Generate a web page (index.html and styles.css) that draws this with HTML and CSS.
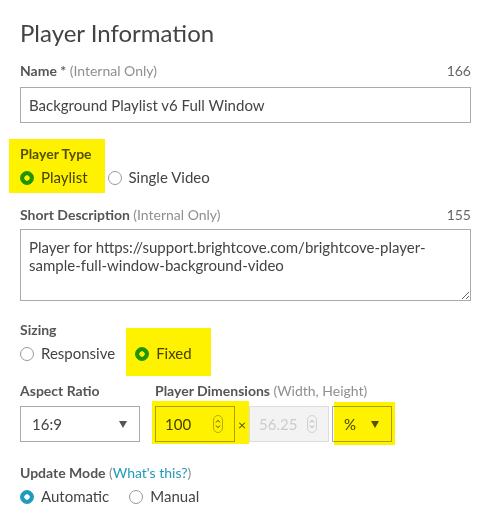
FILE: index.html
```html
<!DOCTYPE html>
<html lang="en">
<head>
<meta charset="utf-8">
<title>Player Information</title>
<link rel="stylesheet" href="styles.css">
</head>
<body>
<div class="page">
  <div class="form">
    <h1 class="title">Player Information</h1>

    <div class="field field-name">
      <div class="label-row">
        <span class="label">Name <span class="req">*</span> <span class="hint">(Internal Only)</span></span>
        <span class="count">166</span>
      </div>
      <div class="input control-top-lg">Background Playlist v6 Full Window</div>
    </div>

    <div class="field field-gap-lg">
      <div class="label-row"><span class="label">Player Type</span></div>
      <div class="radios">
        <span class="radio"><span class="dot checked"></span>Playlist</span>
        <span class="radio"><span class="dot"></span>Single Video</span>
      </div>
    </div>

    <div class="field field-gap">
      <div class="label-row">
        <span class="label">Short Description <span class="hint">(Internal Only)</span></span>
        <span class="count">155</span>
      </div>
      <textarea class="textarea control-top">Player for https://support.brightcove.com/brightcove-player-sample-full-window-background-video</textarea>
    </div>

    <div class="field field-gap-md">
      <div class="label-row"><span class="label">Sizing</span></div>
      <div class="radios">
        <span class="radio"><span class="dot"></span>Responsive</span>
        <span class="radio"><span class="dot checked"></span>Fixed</span>
      </div>
    </div>

    <div class="row field-gap">
      <div class="col-aspect">
        <div class="label-row"><span class="label">Aspect Ratio</span></div>
        <div class="select select-aspect control-top-md"><span>16:9</span><span class="caret"></span></div>
      </div>
      <div class="col-dims">
        <div class="label-row"><span class="label">Player Dimensions <span class="hint">(Width, Height)</span></span></div>
        <div class="dims control-top-md">
          <div class="num">
            <span>100</span>
            <svg class="spin" width="10" height="18" viewBox="0 0 10 18"><rect x="0.5" y="0.5" width="9" height="17" rx="4.5" fill="none" stroke="#b5b5b5"/><polyline points="3,7.5 5,5.3 7,7.5" fill="none" stroke="#555" stroke-width="1"/><polyline points="3,10.5 5,12.7 7,10.5" fill="none" stroke="#555" stroke-width="1"/></svg>
          </div>
          <span class="times">×</span>
          <div class="num num-disabled">
            <span>56.25</span>
            <svg class="spin" width="10" height="18" viewBox="0 0 10 18"><rect x="0.5" y="0.5" width="9" height="17" rx="4.5" fill="none" stroke="#cfcfcf"/><polyline points="3,7.5 5,5.3 7,7.5" fill="none" stroke="#aaa" stroke-width="1"/><polyline points="3,10.5 5,12.7 7,10.5" fill="none" stroke="#aaa" stroke-width="1"/></svg>
          </div>
          <div class="select select-unit"><span>%</span><span class="caret"></span></div>
        </div>
      </div>
    </div>

    <div class="field field-gap-lg">
      <div class="label-row"><span class="label">Update Mode <span class="hint">(<span class="link">What's this?</span>)</span></span></div>
      <div class="radios">
        <span class="radio"><span class="dot checked"></span>Automatic</span>
        <span class="radio"><span class="dot"></span>Manual</span>
      </div>
    </div>
  </div>

  <div class="hl hl-type"></div>
  <div class="hl hl-fixed"></div>
  <div class="hl hl-width"></div>
  <div class="hl hl-unit"></div>
</div>
</body>
</html>
```

FILE: styles.css
```css
html, body {
  margin: 0;
  background: #fff;
}

body {
  font-family: Lato, "Noto Sans", "Liberation Sans", sans-serif;
  color: #444;
}

.page {
  position: relative;
  padding: 18px 0 0 20px;
}

.form {
  width: 451px;
}

.title {
  margin: 0;
  font-size: 24px;
  font-weight: 400;
  line-height: 29px;
  color: #444;
}

.field-name { margin-top: 14px; }
.field-gap { margin-top: 18px; }
.field-gap-md { margin-top: 19px; }
.field-gap-lg { margin-top: 21px; }

.label-row {
  display: flex;
  justify-content: space-between;
  font-size: 14px;
  line-height: 20px;
}

.label {
  font-weight: 700;
  color: #555;
}

.req {
  color: #666;
}

.hint {
  font-weight: 400;
  color: #8f8f8f;
}

.link {
  color: #2299b8;
}

.count {
  color: #666;
}

.control-top { margin-top: 4px; }
.control-top-md { margin-top: 5px; }
.control-top-lg { margin-top: 6px; }

.input {
  box-sizing: border-box;
  height: 36px;
  border: 1px solid #aaa;
  padding: 0 8px;
  display: flex;
  align-items: center;
  font-size: 15px;
  color: #444;
}

.textarea {
  display: block;
  box-sizing: border-box;
  width: 451px;
  height: 72px;
  border: 1px solid #aaa;
  border-radius: 0;
  padding: 8px 8px;
  font-family: Lato, "Noto Sans", "Liberation Sans", sans-serif;
  font-size: 15px;
  line-height: 18px;
  color: #444;
  resize: both;
  overflow: hidden;
}

.radios {
  display: flex;
  gap: 20px;
  margin-top: 3px;
  font-size: 15px;
  line-height: 20px;
  color: #444;
}

.radio {
  display: flex;
  align-items: center;
}

.dot {
  box-sizing: border-box;
  width: 14px;
  height: 14px;
  border-radius: 50%;
  border: 1px solid #999;
  background: #fff;
  margin-right: 7px;
  margin-top: 1px;
}

.dot.checked {
  border-color: #1f9cbd;
  background: radial-gradient(circle, #fff 2.4px, #1f9cbd 3px);
}

.row {
  display: flex;
  gap: 15px;
}

.col-aspect {
  width: 120px;
}

.select {
  box-sizing: border-box;
  height: 36px;
  border: 1px solid #aaa;
  display: flex;
  align-items: center;
  justify-content: space-between;
  padding: 0 12px 0 11px;
  font-size: 15px;
  color: #444;
}

.caret {
  width: 0;
  height: 0;
  border-left: 4px solid transparent;
  border-right: 4px solid transparent;
  border-top: 7px solid #555;
}

.dims {
  display: flex;
  align-items: center;
}

.num {
  box-sizing: border-box;
  width: 80px;
  height: 36px;
  border: 1px solid #aaa;
  display: flex;
  align-items: center;
  justify-content: space-between;
  padding: 0 11px 0 9px;
  font-size: 15px;
  color: #444;
}

.num-disabled {
  background: #f3f3f3;
  border-color: #ddd;
  color: #ccc;
}

.times {
  width: 14px;
  text-align: center;
  font-size: 14px;
  color: #555;
}

.select-unit {
  width: 60px;
  margin-left: 3px;
}

.hl {
  position: absolute;
  background: #fff200;
  mix-blend-mode: multiply;
}

.hl-type  { left: 9px;   top: 139px; width: 96px; height: 54px; }
.hl-fixed { left: 126px; top: 328px; width: 85px; height: 48px; }
.hl-width { left: 152px; top: 401px; width: 97px; height: 43px; }
.hl-unit  { left: 334px; top: 402px; width: 61px; height: 43px; }
```
